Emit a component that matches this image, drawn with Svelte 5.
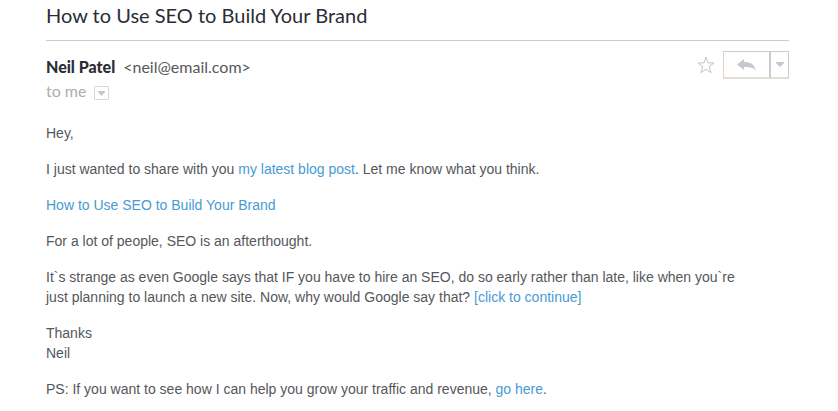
<script>
    let starred = $state(false)

    const subject = 'How to Use SEO to Build Your Brand'
    const sender = { name: 'Neil Patel', email: 'neil@email.com' }
</script>

<main>
    <h1>{subject}</h1>

    <header>
        <div class="sender">
            <p class="from">
                <strong>{sender.name}</strong>
                <span>&lt;{sender.email}&gt;</span>
            </p>
            <p class="to">
                to me
                <button class="details" type="button" aria-label="Show details">
                    <svg width="7" height="5" viewBox="0 0 7 5" aria-hidden="true">
                        <path d="M0 0h7v1L3.5 5 0 1z" />
                    </svg>
                </button>
            </p>
        </div>

        <div class="actions">
            <button
                class="star"
                class:starred
                type="button"
                aria-label="Star"
                aria-pressed={starred}
                onclick={() => starred = !starred}
            >
                <svg width="18" height="18" viewBox="0 0 18 18" aria-hidden="true">
                    <path d="M9 1l2 5.8 6 .2-4.8 3.7 1.8 6L9 13.2 4 16.7l1.8-6L1 7l6-.2z" />
                </svg>
            </button>
            <div class="reply-group">
                <button class="reply" type="button" aria-label="Reply">
                    <svg width="20" height="13" viewBox="0 0 20 13" aria-hidden="true">
                        <path d="M0 6.500L7 1v3c6.500 0 10.500 2.500 12 8.500C16 9.500 13 9 7 9v3z" />
                    </svg>
                </button>
                <button class="more" type="button" aria-label="More">
                    <svg width="8" height="5" viewBox="0 0 8 5" aria-hidden="true">
                        <path d="M0 0h8v1L4 5 0 1z" />
                    </svg>
                </button>
            </div>
        </div>
    </header>

    <article>
        <p>Hey,</p>
        <p>I just wanted to share with you <a href="#post">my latest blog post</a>. Let me know what you think.</p>
        <p><a href="#post">{subject}</a></p>
        <p>For a lot of people, SEO is an afterthought.</p>
        <p>It`s strange as even Google says that IF you have to hire an SEO, do so early rather than late, like when you`re just planning to launch a new site. Now, why would Google say that? <a href="#continue">[click to continue]</a></p>
        <p>Thanks<br />Neil</p>
        <p>PS: If you want to see how I can help you grow your traffic and revenue, <a href="#here">go here</a>.</p>
    </article>
</main>

<style>
    :global(body) {
        margin: 0;
        background: #fff;
    }

    main {
        padding: 3px 49px 0 46px;
        font-family: Lato, "Liberation Sans", sans-serif;
        font-size: 16px;
        line-height: 20px;
        color: #55575b;
    }

    h1 {
        margin: 0;
        padding-bottom: 13px;
        border-bottom: 1px solid #ccc;
        font-size: 20px;
        font-weight: 400;
        line-height: 24px;
        color: #2b2d35;
    }

    p {
        margin: 0;
    }

    header {
        display: flex;
        justify-content: space-between;
        align-items: flex-start;
        padding-top: 10px;
    }

    .sender {
        display: flex;
        flex-direction: column;
        gap: 4px;
        padding-top: 6px;
    }

    .from, .to {
        display: flex;
        align-items: center;
        gap: 8px;
    }

    .to {
        color: #adadad;
    }

    strong {
        font-weight: 900;
        color: #2b2d35;
    }

    button {
        display: flex;
        align-items: center;
        justify-content: center;
        box-sizing: border-box;
        margin: 0;
        padding: 0;
        border: 0;
        background: none;
        cursor: pointer;
    }

    svg {
        fill: #c8c8c8;
    }

    .details {
        width: 15px;
        height: 14px;
        margin-top: 4px;
        border: 1px solid #ddd6cf;
        border-radius: 1px;
    }

    .actions {
        display: flex;
        align-items: center;
        gap: 8px;
    }

    .star svg {
        fill: none;
        stroke: #c8c4c0;
    }

    .star.starred svg {
        fill: #f2c744;
    }

    .reply-group {
        display: flex;
    }

    .reply, .more {
        height: 28px;
        border: 1px solid #ccc;
        border-bottom: 2px solid #e6ddd5;
    }

    .reply {
        width: 48px;
        border-right-width: 2px;
        border-left-color: #ddd4cc;
    }

    .more {
        width: 18px;
        border-left: 0;
    }

    article {
        display: flex;
        flex-direction: column;
        gap: 16px;
        padding: 22px 40px 12px 0;
        font-family: "Liberation Sans", Arial, sans-serif;
        font-size: 14px;
    }

    a {
        color: #479bd5;
        text-decoration: none;
    }
</style>
